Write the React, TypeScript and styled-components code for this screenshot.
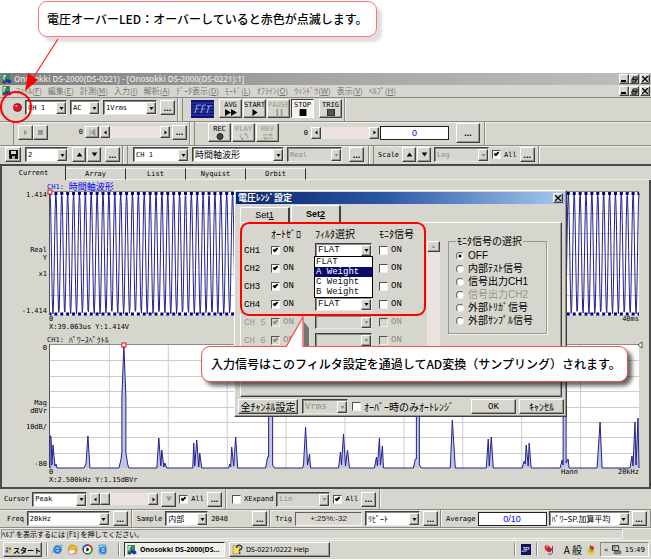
import React, { useState } from "react";
import styled, { createGlobalStyle, css } from "styled-components";

const FACE = "#d6d5ce";
const MONO = '"DejaVu Sans Mono", "Noto Sans CJK JP", monospace';
const GOTHIC = '"Noto Sans CJK JP", sans-serif';
const UI = '"Noto Sans", "Noto Sans CJK JP", sans-serif';

const GlobalStyle = createGlobalStyle`
  *, *::before, *::after { box-sizing: border-box; }
  body { margin: 0; background: #fff; color: #000; overflow: hidden; }
  button, input, select { font: inherit; color: inherit; margin: 0; padding: 0; border: 0; border-radius: 0; }
  p, h1, h2, ul { margin: 0; padding: 0; font: inherit; }
`;

const raised = css`
  background: ${FACE};
  border: 1px solid;
  border-color: #fff #404040 #404040 #fff;
  box-shadow: inset -1px -1px 0 #99978f;
`;
const sunken = css`
  border: 1px solid;
  border-color: #606060 #f4f4f0 #f4f4f0 #606060;
`;

/* ---------- shared controls ---------- */

const Btn = styled.button<{ $w: number; $h?: number; $pressed?: boolean; $off?: boolean }>`
  ${raised}
  flex: none;
  width: ${(p) => p.$w}px;
  height: ${(p) => p.$h ?? 15}px;
  display: flex;
  flex-direction: column;
  align-items: center;
  justify-content: center;
  line-height: 8px;
  white-space: nowrap;
  overflow: hidden;
  color: ${(p) => (p.$off ? "#99978f" : "#000")};
  ${(p) => p.$pressed && css`background: #f3f2ee; border-color: #404040 #fff #fff #404040; box-shadow: none;`}
`;

const DotsMark = styled.span`
  font: bold 9px/6px "Liberation Sans", sans-serif;
`;
const Dots = ({ w = 15, h = 15 }: { w?: number; h?: number }) => (
  <Btn $w={w} $h={h} aria-label="詳細"><DotsMark>...</DotsMark></Btn>
);

const ComboBox = styled.span<{ $w: number; $h: number }>`
  position: relative;
  flex: none;
  display: block;
  width: ${(p) => p.$w}px;
  height: ${(p) => p.$h}px;
`;
const ComboSelect = styled.select<{ $size: number; $family: string }>`
  appearance: none;
  display: block;
  width: 100%;
  height: 100%;
  padding: 0 11px 0 2px;
  background: #fff;
  border: 1px solid;
  border-color: #404040 #e8e8e4 #e8e8e4 #404040;
  box-shadow: inset 1px 1px 0 #8a8a86;
  font-family: ${(p) => p.$family};
  font-size: ${(p) => p.$size}px;
  line-height: 12px;
  opacity: 1;
  &:disabled { background: ${FACE}; color: #8a8a86; }
`;
const ComboArrow = styled.span<{ $off?: boolean }>`
  ${raised}
  position: absolute;
  top: 2px;
  right: 1px;
  bottom: 1px;
  width: 10px;
  display: grid;
  place-items: center;
  pointer-events: none;
  color: ${(p) => (p.$off ? "#8a8a86" : "#000")};
`;

const Tri = ({ dir = "down", size = 5 }: { dir?: "up" | "down" | "left" | "right"; size?: number }) => {
  const d = { up: "M5 2 9 8H1z", down: "M1 2h8L5 8z", left: "M7 1v8L2 5z", right: "M3 1v8l5-4z" }[dir];
  return <svg width={size} height={size} viewBox="0 0 10 10" aria-hidden><path d={d} fill="currentColor" /></svg>;
};

type ComboProps = { label: string; value: string; w: number; h?: number; off?: boolean; size?: number; family?: string };
const Combo = ({ label, value, w, h = 15, off, size = 7, family = MONO }: ComboProps) => (
  <ComboBox $w={w} $h={h}>
    <ComboSelect aria-label={label} disabled={off} defaultValue={value} $size={size} $family={family}>
      <option>{value}</option>
    </ComboSelect>
    <ComboArrow $off={off}><Tri /></ComboArrow>
  </ComboBox>
);

const CheckLabel = styled.label<{ $off?: boolean; $gap?: number }>`
  display: flex;
  align-items: center;
  gap: ${(p) => p.$gap ?? 3}px;
  white-space: nowrap;
  color: ${(p) => (p.$off ? "#8a8a86" : "#000")};
`;
const CheckInput = styled.input`
  appearance: none;
  flex: none;
  width: 9px;
  height: 9px;
  display: grid;
  place-items: center;
  background: #fff;
  border: 1px solid;
  border-color: #505050 #eee #eee #505050;
  &:disabled { background: ${FACE}; }
  &:checked::after {
    content: "";
    width: 5px;
    height: 3px;
    border: solid #000;
    border-width: 0 0 2px 2px;
    transform: rotate(-45deg);
    margin-bottom: 2px;
  }
  &:disabled:checked::after { border-color: #8a8a86; }
`;
const Check = ({ text, on, off, gap }: { text: React.ReactNode; on?: boolean; off?: boolean; gap?: number }) => (
  <CheckLabel $off={off} $gap={gap}>
    <CheckInput type="checkbox" defaultChecked={on} disabled={off} />
    {text}
  </CheckLabel>
);

const ScrollBox = styled.div<{ $w: number }>`
  flex: none;
  display: flex;
  width: ${(p) => p.$w}px;
  height: 12px;
  background: #ece3e1;
`;
const ScrollTrack = styled.span`flex: 1;`;
const Thumb = styled.span`
  ${raised}
  width: 10px;
`;
const Scroll = ({ w, thumb }: { w: number; thumb?: boolean }) => (
  <ScrollBox $w={w}>
    <Btn $w={10} $h={12} aria-label="前へ"><Tri dir="left" /></Btn>
    {thumb && <Thumb />}
    <ScrollTrack />
    <Btn $w={10} $h={12} aria-label="次へ"><Tri dir="right" /></Btn>
  </ScrollBox>
);

const Field = styled.input<{ $w: number; $gray?: boolean }>`
  ${sunken}
  flex: none;
  width: ${(p) => p.$w}px;
  height: 14px;
  text-align: center;
  font: ${(p) => (p.$gray ? 8 : 9)}px "Liberation Sans", sans-serif;
  background: ${(p) => (p.$gray ? "#dcd8d2" : "#fff")};
  color: ${(p) => (p.$gray ? "#222" : "#00f")};
  ${(p) => !p.$gray && css`border-color: #202020;`}
`;

/* ---------- page frame ---------- */

const Page = styled.div`
  position: relative;
  width: 100%;
  overflow: hidden;
  font: 7px/8px ${MONO};
`;
const Header = styled.header`
  height: 73px;
  padding: 1px 0 0 38px;
`;
const Callout = styled.p`
  width: max-content;
  padding: 9px 8px;
  border-radius: 9px;
  background: #fff;
  font: 500 12px/16px ${GOTHIC};
  white-space: nowrap;
`;
const TopCallout = styled(Callout)`
  border: 1px solid #fb7676;
  box-shadow: 5px 5px 3px #dfdfdf;
`;
const FilterCallout = styled(Callout)`
  position: absolute;
  left: 201px;
  top: 346px;
  padding: 9px 6px 9px 9px;
  border: 1px solid #fa5050;
  box-shadow: 4px 4px 4px rgba(0, 0, 0, 0.6);
`;
const Overlay = styled.svg<{ $x: number; $y: number }>`
  position: absolute;
  left: ${(p) => p.$x}px;
  top: ${(p) => p.$y}px;
  overflow: visible;
  pointer-events: none;
`;
const RedRing = styled.div`
  position: absolute;
  left: 0;
  top: 91px;
  width: 32px;
  height: 32px;
  border: 2px solid #f00;
  border-radius: 50%;
  pointer-events: none;
`;
const AppWindow = styled.section`
  background: ${FACE};
`;
const TitleBar = styled.div`
  display: flex;
  align-items: center;
  gap: 2px;
  height: 12px;
  padding: 0 1px 0 2px;
  background: linear-gradient(90deg, #7e7e7e, #a8a6a4 50%, #c0beba);
`;
const TitleText = styled.h1`
  flex: 1;
  color: #e6e5e0;
  font: 600 8px/12px "Open Sans", sans-serif;
  white-space: nowrap;
`;
const MenuBar = styled.nav`
  display: flex;
  align-items: center;
  height: 13px;
  padding: 0 1px 0 2px;
  border-bottom: 1px solid #8a8a86;
`;
const MenuList = styled.div`
  flex: 1;
  display: flex;
  gap: 6px;
  padding-left: 4px;
`;
const MenuItem = styled.button`
  background: none;
  color: #77756f;
  font: 8px/12px ${GOTHIC};
  white-space: nowrap;
`;
const WinButtons = styled.div`
  display: flex;
  height: 10px;
`;
const WinButton = styled(Btn)`
  &:last-child { margin-left: 1px; }
`;

const AppIcon = ({ size = 10 }: { size?: number }) => (
  <svg width={size} height={size} viewBox="0 0 20 20" aria-hidden>
    <rect x="1" y="0" width="15" height="14" fill="#2f8a58" />
    <path d="M4 11V3h4" fill="none" stroke="#d8f5e0" strokeWidth="2.5" />
    <path d="M8 10l10 2 1 5-5 2-7-4z" fill="#1b2fc0" />
    <path d="M1 14h7v5H1z" fill="#444" />
  </svg>
);
const CloseMark = () => (
  <svg width="6" height="6" viewBox="0 0 6 6" aria-hidden><path d="M0 0l6 6M6 0L0 6" stroke="#000" strokeWidth="1.3" /></svg>
);
const CaptionButtons = () => (
  <WinButtons>
    <WinButton $w={10} $h={10} aria-label="最小化">
      <svg width="6" height="6" viewBox="0 0 6 6"><path d="M0 5h5" stroke="#000" strokeWidth="2" /></svg>
    </WinButton>
    <WinButton $w={10} $h={10} aria-label="元に戻す">
      <svg width="7" height="7" viewBox="0 0 7 7"><path d="M2 1h4v3H2zM1 3h4v3H1z" fill="none" stroke="#000" /></svg>
    </WinButton>
    <WinButton $w={10} $h={10} aria-label="閉じる"><CloseMark /></WinButton>
  </WinButtons>
);

const ToolRow = styled.div<{ $h: number; $indent?: number; $last?: boolean }>`
  display: flex;
  gap: 4px;
  height: ${(p) => p.$h}px;
  padding-left: ${(p) => p.$indent ?? 0}px;
  border-bottom: ${(p) => (p.$last ? "2px solid #4a4a4a" : "1px solid #8a8a86")};
  box-shadow: ${(p) => (p.$last ? "none" : "0 1px 0 #efeeea")};
`;
const Group = styled.div<{ $pad?: string; $gap?: number; $line?: boolean }>`
  display: flex;
  align-items: center;
  gap: ${(p) => p.$gap ?? 3}px;
  padding: ${(p) => p.$pad ?? "0"};
  border-right: 1px solid #8a8a86;
  box-shadow: 1px 0 0 #f2f1ed;
  ${(p) => p.$line && css`border-left: 1px solid #8a8a86;`}
`;
const Cluster = styled.div<{ $gap?: number }>`
  display: flex;
  align-items: center;
  gap: ${(p) => p.$gap ?? 1}px;
`;
const Text = styled.span<{ $w?: number; $right?: boolean }>`
  flex: none;
  width: ${(p) => (p.$w ? `${p.$w}px` : "auto")};
  text-align: ${(p) => (p.$right ? "right" : "left")};
  white-space: nowrap;
`;
const LedButton = styled.button`
  width: 10px;
  height: 10px;
  background: ${FACE};
  display: grid;
  place-items: center;
`;
const Caption = styled.span`
  font: 7px/8px "DejaVu Sans Mono", monospace;
`;

const glyphs: Record<string, React.ReactNode> = {
  avg: <path d="M0 0v8l7-4zM7 0v8l7-4z" fill="currentColor" />,
  play: <path d="M4 0v8l6-4z" fill="currentColor" />,
  pause: <path d="M4 0h2v8H4zM9 0h2v8H9z" fill="currentColor" />,
  stop: <path d="M3 0h8v8H3z" fill="currentColor" />,
  trig: <path d="M3 0h8v8H3z" fill="#555" stroke="#111" />,
  rec: <circle cx="7" cy="4" r="3.5" fill="#444" stroke="#111" />,
  loop: <path d="M4 1a4 3.4 0 0 0 2 6l-1-2m1 2-2 1M10 7a4 3.4 0 0 0-2-6l1 2M8 1l2-1" fill="none" stroke="currentColor" />,
  rev: <path d="M1 2h10M9 0l3 2-3 2M13 6H3M5 4 2 6l3 2" fill="none" stroke="currentColor" />,
};
const MediaButton = ({ text, glyph, off, pressed }: { text: string; glyph: string; off?: boolean; pressed?: boolean }) => (
  <Btn $w={23} $h={19} $off={off} $pressed={pressed}>
    <Caption>{text}</Caption>
    <svg width="12" height="7" viewBox="0 0 14 8" aria-hidden>{glyphs[glyph]}</svg>
  </Btn>
);

/* ---------- tabs and charts ---------- */

const TabStrip = styled.div`
  display: flex;
  align-items: flex-end;
  height: 14px;
  border-left: 2px solid #4a4a4a;
`;
const Tab = styled.button<{ $active?: boolean }>`
  width: ${(p) => (p.$active ? 64 : 60)}px;
  height: ${(p) => (p.$active ? 14 : 12)}px;
  background: ${FACE};
  border-right: 1px solid #303030;
  border-top: ${(p) => (p.$active ? "0" : "1px solid #f2f1ed")};
  border-bottom: ${(p) => (p.$active ? "0" : "1px solid #f2f1ed")};
  font: 7px/8px ${MONO};
`;
const TabRest = styled.span`
  flex: 1;
  height: 1px;
  background: #f2f1ed;
`;
const ChartPanel = styled.main`
  display: flex;
  flex-direction: column;
  gap: 4px;
  padding: 2px 10px 3px 0;
  border: solid #4a4a4a;
  border-width: 0 2px 2px 2px;
`;
const ChartGrid = styled.figure`
  margin: 0;
  display: grid;
  grid-template-columns: 45px minmax(0, 1fr);
  column-gap: 2px;
`;
const ChartTitle = styled.figcaption<{ $blue?: boolean }>`
  grid-column: 1 / -1;
  padding-left: 45px;
  height: 9px;
  display: flex;
  align-items: center;
  gap: 5px;
  color: ${(p) => (p.$blue ? "#00f" : "#111")};
`;
const Kana = styled.span<{ $size: number }>`
  font: ${(p) => p.$size}px/9px ${GOTHIC};
`;
const YAxis = styled.div`
  display: grid;
  grid-template-rows: 55px 24px 1fr 8px;
  text-align: right;
`;
const Plot = styled.svg`
  display: block;
  width: 100%;
  height: 124px;
  background: #fff;
  border-left: 1px solid #555;
  border-top: 1px solid #8a8a86;
  overflow: visible;
`;
const Footer = styled.div`
  grid-column: 2;
  line-height: 8px;
`;
const FootRow = styled.div`
  display: flex;
  justify-content: space-between;
`;
const FootRight = styled.span`
  display: flex;
  gap: 40px;
`;

const W = 590;
const H = 123;
const wavePath = Array.from({ length: 1025 }, (_, i) => {
  const y = H / 2 - (H / 2 - 1) * Math.cos((2 * Math.PI * 100 * i) / 1024);
  return `${i ? "L" : "M"}${((i * W) / 1024).toFixed(2)} ${y.toFixed(1)}`;
}).join("");

const spectrum: [number, number][] = [
  [0, 123], [0, 91], [1, 91], [2, 120], [3, 100], [5, 121], [6, 119], [7, 123], [34, 123], [36, 119], [38, 91], [40, 123],
  [69, 123], [71, 115], [72, 108], [72, 52], [74, 0], [76, 52], [76, 108], [78, 120], [79, 123],
  [107, 123], [109, 93], [111, 121], [112, 105], [114, 122], [115, 118], [117, 123],
  [143, 123], [144, 98], [145, 121], [147, 95], [149, 122], [150, 108], [152, 123],
  [179, 123], [180, 119], [181, 122], [182, 102], [184, 121], [186, 92], [188, 123],
  [216, 123], [218, 112], [219, 112], [219, 52], [221, 8], [223, 52], [223, 120], [225, 123],
  [253, 123], [254, 119], [256, 82], [258, 120], [260, 109], [261, 123],
  [289, 123], [291, 107], [292, 120], [294, 89], [296, 121], [298, 105], [300, 123],
  [325, 123], [327, 112], [328, 121], [330, 93], [331, 120], [333, 101], [334, 123],
  [364, 123], [366, 114], [367, 114], [367, 52], [368, 10], [370, 52], [370, 120], [372, 123],
  [401, 123], [403, 75], [406, 123], [437, 123], [439, 94], [440, 121], [442, 92], [444, 123],
  [473, 123], [475, 116], [476, 119], [477, 100], [479, 121], [480, 98], [482, 123],
  [511, 123], [513, 115], [514, 120], [514, 52], [516, 20], [517, 52], [517, 118], [519, 114], [520, 123],
  [548, 123], [551, 77], [553, 123], [581, 123], [583, 111], [584, 121], [586, 77], [587, 120], [589, 73], [590, 123],
];
const spectrumPath = "M" + spectrum.map((p) => p.join(" ")).join("L");

const GridLines = ({ rows, cols }: { rows: number; cols: number }) => (
  <g stroke="#cfcccc">
    {Array.from({ length: rows - 1 }, (_, i) => {
      const y = Math.round(((i + 1) * H) / rows) + 0.5;
      return <line key={i} x1="0" x2={W} y1={y} y2={y} />;
    })}
    {Array.from({ length: cols - 1 }, (_, i) => {
      const x = ((i + 1) * W) / cols + 0.5;
      return <line key={`c${i}`} x1={x} x2={x} y1="0" y2={H} />;
    })}
  </g>
);

const TimeChart = () => (
  <ChartGrid>
    <ChartTitle $blue>CH1: <Kana $size={9}>時間軸波形</Kana></ChartTitle>
    <YAxis><span>1.414</span><span>Real<br />Y</span><span>x1</span><span>-1.414</span></YAxis>
    <Plot viewBox={`0 0 ${W} ${H}`} preserveAspectRatio="none">
      <GridLines rows={6} cols={1} />
      <path d={wavePath} fill="none" stroke="#202090" strokeWidth="1" />
      <path d={`M0 1.5H${W}M0 ${H - 1}H${W}`} stroke="#000080" strokeWidth="3" strokeDasharray="3 2.9" strokeDashoffset="1.5" />
      <rect x="-2" y="-2" width="4" height="4" fill="#fff" stroke="#f00" />
    </Plot>
    <Footer>
      <FootRow><span>0</span><span>40ms</span></FootRow>
      X:39.063us Y:1.414V
    </Footer>
  </ChartGrid>
);

const SpectrumChart = () => (
  <ChartGrid>
    <ChartTitle>CH1: <Kana $size={8}>ﾊﾟﾜｰｽﾍﾟｸﾄﾙ</Kana></ChartTitle>
    <YAxis><span>0</span><span>Mag<br />dBVr</span><span>10dB/</span><span>-80</span></YAxis>
    <Plot viewBox={`0 0 ${W} ${H}`} preserveAspectRatio="none">
      <GridLines rows={8} cols={10} />
      <path d={spectrumPath} fill="#c4c4e4" stroke="#20208c" strokeWidth="1" />
      <rect x="72" y="-2" width="4" height="4" fill="#fff" stroke="#f00" />
      <path d="M593-3v6l-4-3z" fill="#fff" stroke="#333" strokeWidth="0.8" />
    </Plot>
    <Footer>
      <FootRow><span>0</span><FootRight><span>Hann</span><span>20kHz</span></FootRight></FootRow>
      X:2.500kHz Y:1.15dBVr
    </Footer>
  </ChartGrid>
);

/* ---------- voltage range dialog ---------- */

const DialogBox = styled.section`
  ${raised}
  position: absolute;
  left: 234px;
  top: 190px;
  width: 333px;
  padding: 1px;
  font: 10px/12px ${GOTHIC};
`;
const DialogTitle = styled.div`
  display: flex;
  align-items: center;
  justify-content: space-between;
  height: 12px;
  padding: 0 2px;
  background: linear-gradient(90deg, #0a246a, #2c57a6 45%, #a6caf0);
  color: #fff;
  font: bold 9px/12px ${GOTHIC};
`;
const DialogTabs = styled.div`
  display: flex;
  align-items: flex-end;
  gap: 1px;
  height: 18px;
  padding-left: 4px;
`;
const DialogTab = styled.button<{ $active?: boolean }>`
  width: 50px;
  height: ${(p) => (p.$active ? 17 : 15)}px;
  background: ${FACE};
  border: solid;
  border-width: 1px 2px 0 1px;
  border-color: #fff #404040 #fff #fff;
  border-radius: 2px 2px 0 0;
  font: ${(p) => (p.$active ? "bold " : "")}9px/14px "Liberation Sans", sans-serif;
`;
const TabPage = styled.div`
  display: flex;
  align-items: flex-start;
  height: 175px;
  margin: 0 3px 0 4px;
  padding: 4px 14px 0 3px;
  border: 1px solid;
  border-color: #fff #404040 #404040 #fff;
  box-shadow: inset -1px -1px 0 #99978f;
`;
const ChannelTable = styled.table`
  border-collapse: collapse;
  table-layout: fixed;
  width: 183px;
  th, td { padding: 0; text-align: left; font-weight: normal; white-space: nowrap; }
  thead tr { height: 14px; }
  tbody tr { height: 18px; }
`;
const Narrow = styled.span<{ $off?: boolean }>`
  font: 9px/12px "Liberation Mono", monospace;
  color: ${(p) => (p.$off ? "#99978f" : "inherit")};
`;
const Col = styled.col<{ $w: number }>`
  width: ${(p) => p.$w}px;
`;
const VScroll = styled.div`
  flex: none;
  width: 13px;
  height: 112px;
  margin-top: 14px;
  background: #ece3e1;
`;
const MonitorSet = styled.fieldset`
  margin: 8px 0 0 8px;
  padding: 2px 7px 6px;
  min-width: 0;
  flex: 1;
  border: 1px solid #99978f;
  box-shadow: 1px 1px 0 #f5f4f0;
  legend { padding: 0 1px; line-height: 12px; white-space: nowrap; }
`;
const RadioLabel = styled.label<{ $off?: boolean }>`
  display: flex;
  align-items: center;
  gap: 4px;
  height: 13px;
  font: 10px/12px "Liberation Sans", "Noto Sans CJK JP", sans-serif;
  white-space: nowrap;
  color: ${(p) => (p.$off ? "#99978f" : "#000")};
`;
const RadioInput = styled.input`
  appearance: none;
  flex: none;
  width: 8px;
  height: 8px;
  border-radius: 50%;
  border: 1px solid;
  border-color: #606060 #eee #eee #606060;
  background: #fff;
  &:checked { background: radial-gradient(circle, #000 0 1px, #fff 2px); }
`;
const FilterList = styled.ul`
  position: absolute;
  left: 79px;
  top: 65px;
  width: 59px;
  border: 1px solid #000;
  background: #fff;
  list-style: none;
`;
const FilterItem = styled.li<{ $hot?: boolean }>`
  padding-left: 1px;
  font: 9px/10px "Liberation Mono", monospace;
  background: ${(p) => (p.$hot ? "#0a0a6a" : "#fff")};
  color: ${(p) => (p.$hot ? "#fff" : "#111")};
`;
const DialogFoot = styled.div`
  display: flex;
  align-items: center;
  gap: 4px;
  padding: 2px 1px 1px 2px;
`;
const FootButtons = styled.div`
  display: flex;
  gap: 3px;
  margin-left: auto;
`;
const RedFrame = styled.div`
  position: absolute;
  left: 240px;
  top: 222px;
  width: 186px;
  height: 94px;
  border: 2px solid #f00;
  border-radius: 9px;
  pointer-events: none;
`;

const channels = [
  { name: "CH1" }, { name: "CH2" }, { name: "CH3" }, { name: "CH4" },
  { name: "CH 5", off: true }, { name: "CH 6", off: true },
];
const sources = ["OFF", "内部ﾃｽﾄ信号", "信号出力CH1", "信号出力CH2", "外部ﾄﾘｶﾞ信号", "外部ｻﾝﾌﾟﾙ信号"];

const RangeDialog = () => {
  const [source, setSource] = useState("OFF");
  return (
    <DialogBox role="dialog" aria-label="電圧ﾚﾝｼﾞ設定">
      <DialogTitle>
        <span>電圧ﾚﾝｼﾞ設定</span>
        <WinButton $w={10} $h={10} aria-label="閉じる"><CloseMark /></WinButton>
      </DialogTitle>
      <DialogTabs>
        <DialogTab>Set<u>1</u></DialogTab>
        <DialogTab $active>Set<u>2</u></DialogTab>
      </DialogTabs>
      <TabPage>
        <ChannelTable>
          <colgroup><Col $w={27} /><Col $w={44} /><Col $w={64} /><Col $w={48} /></colgroup>
          <thead>
            <tr><th /><th>ｵｰﾄｾﾞﾛ</th><th>ﾌｨﾙﾀ選択</th><th>ﾓﾆﾀ信号</th></tr>
          </thead>
          <tbody>
            {channels.map(({ name, off }) => (
              <tr key={name}>
                <td><Narrow $off={off}>{name}</Narrow></td>
                <td><Check on off={off} text={<Narrow>ON</Narrow>} /></td>
                <td>
                  <Combo label={`${name} ﾌｨﾙﾀ`} value={off ? "" : "FLAT"} w={57} h={14} off={off} size={9} family='"Liberation Mono", monospace' />
                </td>
                <td><Check off={off} text={<Narrow>ON</Narrow>} /></td>
              </tr>
            ))}
          </tbody>
        </ChannelTable>
        <VScroll><Btn $w={13} $h={11} $off aria-label="上へ"><Tri dir="up" /></Btn></VScroll>
        <MonitorSet>
          <legend>ﾓﾆﾀ信号の選択</legend>
          {sources.map((s) => (
            <RadioLabel key={s} $off={s === "信号出力CH2"}>
              <RadioInput type="radio" name="monitor" checked={source === s} disabled={s === "信号出力CH2"} onChange={() => setSource(s)} />
              {s}
            </RadioLabel>
          ))}
        </MonitorSet>
      </TabPage>
      <DialogFoot>
        <Btn $w={60}>全ﾁｬﾝﾈﾙ設定</Btn>
        <Combo label="単位" value="Vrms" w={46} off size={9} family='"Liberation Mono", monospace' />
        <Check text="ｵｰﾊﾞｰ時のみｵｰﾄﾚﾝｼﾞ" />
        <FootButtons>
          <Btn $w={45}><Narrow>OK</Narrow></Btn>
          <Btn $w={45}>ｷｬﾝｾﾙ</Btn>
        </FootButtons>
      </DialogFoot>
      <FilterList role="listbox" aria-label="ﾌｨﾙﾀ選択">
        {["FLAT", "A Weight", "C Weight", "B Weight"].map((f) => (
          <FilterItem key={f} role="option" aria-selected={f === "A Weight"} $hot={f === "A Weight"}>{f}</FilterItem>
        ))}
      </FilterList>
    </DialogBox>
  );
};

/* ---------- status bar and taskbar ---------- */

const StatusBar = styled.div`
  display: flex;
  height: 13px;
  padding: 1px 28px 1px 1px;
  border-bottom: 1px solid #f2f1ed;
`;
const StatusText = styled.p`
  flex: 1;
  border: 1px solid;
  border-color: #99978f #f2f1ed #f2f1ed #99978f;
  font: 7px/9px ${GOTHIC};
  white-space: nowrap;
`;
const Taskbar = styled.footer`
  display: flex;
  align-items: center;
  gap: 4px;
  height: 18px;
  padding: 0 2px 1px 3px;
  background: ${FACE};
`;
const StartButton = styled.button`
  ${raised}
  display: flex;
  align-items: center;
  gap: 1px;
  width: 39px;
  height: 15px;
  padding-left: 1px;
  white-space: nowrap;
  font: bold 7px/12px ${GOTHIC};
`;
const Divider = styled.span`
  width: 2px;
  height: 13px;
  background: linear-gradient(90deg, #8a8a86 50%, #fff 50%);
`;
const QuickLaunch = styled.div`
  display: flex;
  gap: 4px;
  width: 62px;
`;
const TaskButton = styled.button<{ $active?: boolean }>`
  ${raised}
  display: flex;
  align-items: center;
  gap: 3px;
  width: 101px;
  height: 15px;
  padding-left: 2px;
  overflow: hidden;
  white-space: nowrap;
  font: ${(p) => (p.$active ? "bold " : "")}7px/12px ${UI};
  ${(p) => p.$active && css`background: #efeeea; border-color: #303030 #fff #fff #303030; box-shadow: none;`}
`;
const Tray = styled.div`
  display: flex;
  align-items: center;
  gap: 5px;
  margin-left: auto;
`;
const JpBadge = styled.span`
  padding: 0 1px;
  background: #101060;
  color: #fff;
  font: 7px/11px "Liberation Sans", sans-serif;
`;
const ImeText = styled.span`
  padding-left: 4px;
  font: 10px/12px ${GOTHIC};
`;
const Clock = styled.div`
  display: flex;
  align-items: center;
  gap: 3px;
  height: 15px;
  width: 49px;
  padding: 0 3px;
  border: 1px solid;
  border-color: #8a8a86 #fff #fff #8a8a86;
  font: 7px/12px "DejaVu Sans", sans-serif;
`;

const WindowsFlag = () => (
  <svg width="9" height="10" viewBox="0 0 18 20" aria-hidden>
    <path d="M3 4q3-3 6-1L8 9Q5 7 2 9z" fill="#e33" /><path d="M10 3q3 2 6 0l-1 7q-3 1-6-1z" fill="#3a3" />
    <path d="M2 11q3-2 6 0l-1 6q-3-2-6 0z" fill="#24c" /><path d="M9 11q3 2 6 0l-1 7q-3 1-6-1z" fill="#eb2" />
  </svg>
);
const quickIcons = [
  <g key="ie"><circle cx="10" cy="10" r="6" fill="none" stroke="#1c7ad8" strokeWidth="3.5" /><path d="M5 10h10" stroke="#1c7ad8" strokeWidth="3" /><path d="M1 17Q-1 9 17 2q3 0 1 4" fill="none" stroke="#4aa0e8" strokeWidth="1.6" /></g>,
  <g key="msn"><path d="M3 9q0-8 8-7 8 1 7 9l-2 7H4z" fill="#f5b625" stroke="#a86a08" /><path d="M3 12l7-2 6 4-5 4H4z" fill="#fff" stroke="#c78" /></g>,
  <g key="wmp"><circle cx="10" cy="10" r="8" fill="#fff" stroke="#222" strokeWidth="2" /><path d="M10 2a8 8 0 0 1 8 8" stroke="#e22" strokeWidth="3" fill="none" /><path d="M18 10a8 8 0 0 1-8 8" stroke="#2a3" strokeWidth="3" fill="none" /><path d="M2 10a8 8 0 0 1 8-8" stroke="#24d" strokeWidth="3" fill="none" /><path d="M8 6v8l6-4z" fill="#111" /></g>,
  <g key="oe"><path d="M4 2h12v16H4z" fill="#cfe4fa" stroke="#28c" strokeWidth="1.5" /><circle cx="11" cy="11" r="5" fill="none" stroke="#1c7ad8" strokeWidth="2.5" /><path d="M7 11h8" stroke="#1c7ad8" strokeWidth="2" /></g>,
];

const menus: [string, string][] = [
  ["ﾌｧｲﾙ", "F"], ["編集", "E"], ["計測", "M"], ["入力", "I"], ["解析", "A"], ["ﾃﾞｰﾀ表示", "D"],
  ["ﾓｰﾄﾞ", "L"], ["ｵﾌﾗｲﾝ", "O"], ["ｳｨﾝﾄﾞｳ", "W"], ["表示", "V"], ["ﾍﾙﾌﾟ", "H"],
];

export default function App() {
  return (
    <Page>
      <GlobalStyle />
      <Header>
        <TopCallout>電圧オーバーLED：オーバーしていると赤色が点滅します。</TopCallout>
      </Header>

      <AppWindow>
        <TitleBar>
          <AppIcon />
          <TitleText>Onosokki DS-2000(DS-0221) - [Onosokki DS-2000(DS-0221):1]</TitleText>
          <CaptionButtons />
        </TitleBar>
        <MenuBar>
          <AppIcon />
          <MenuList>
            {menus.map(([name, key]) => <MenuItem key={name}>{name}(<u>{key}</u>)</MenuItem>)}
          </MenuList>
          <CaptionButtons />
        </MenuBar>

        <ToolRow $h={24}>
          <Group $pad="0 2px 4px 12px">
            <LedButton aria-label="電圧オーバーLED">
              <svg width="9" height="9" viewBox="0 0 9 9"><circle cx="4.5" cy="4.5" r="4" fill="#e8141c" stroke="#5a1014" strokeWidth="0.7" /><circle cx="3.3" cy="3" r="1.1" fill="#ff9c9c" /></svg>
            </LedButton>
            <Combo label="チャンネル" value="CH 1" w={42} />
            <Combo label="カップリング" value="AC" w={30} />
            <Combo label="レンジ" value="1Vrms" w={54} />
            <Dots />
          </Group>
          <Group $pad="0 2px 2px 8px" $gap={5} $line>
            <svg width="23" height="18" viewBox="0 0 23 18" role="img" aria-label="FFT">
              <rect width="23" height="18" fill="#10107c" />
              <path d="M0 3h23M0 6h23M0 9h23M0 12h23M0 15h23" stroke="#5e70c4" strokeWidth="0.6" />
              <path d="M4 13 6 5h4M5 9h3M10 13l2-8h3M11 9h3M16 6h5M18 6l-2 7" fill="none" stroke="#8098dc" strokeWidth="1.2" />
            </svg>
            <Cluster>
              <MediaButton text="AVG" glyph="avg" />
              <MediaButton text="START" glyph="play" />
              <MediaButton text="PAUSE" glyph="pause" off />
              <MediaButton text="STOP" glyph="stop" pressed />
            </Cluster>
            <MediaButton text="TRIG" glyph="trig" />
          </Group>
        </ToolRow>

        <ToolRow $h={24} $indent={13}>
          <Group $pad="0 2px 3px 4px" $gap={2} $line>
            <Cluster $gap={0}>
              <Btn $w={15} $off aria-label="再生"><Tri dir="right" size={7} /></Btn>
              <Btn $w={15} $off aria-label="停止"><svg width="5" height="5"><path d="M0 0h5v5H0z" fill="currentColor" /></svg></Btn>
            </Cluster>
            <Text $w={33} $right>0</Text>
            <Cluster>
              <Btn $w={14} $h={12} $off aria-label="先頭"><svg width="7" height="7" viewBox="0 0 7 7"><path d="M1 0v7M6 0v7L2 3.5z" fill="currentColor" stroke="currentColor" strokeWidth="0.8" /></svg></Btn>
              <Scroll w={70} />
            </Cluster>
            <Dots />
          </Group>
          <Group $pad="0 4px 2px 13px" $gap={3} $line>
            <Cluster>
              <MediaButton text="REC" glyph="rec" />
              <MediaButton text="PLAY" glyph="loop" off />
              <MediaButton text="REV" glyph="rev" off />
            </Cluster>
            <Text $w={26} $right>0</Text>
            <Cluster><Scroll w={68} /><Field $w={69} defaultValue="0" aria-label="位置" /></Cluster>
            <Cluster $gap={0}><Text $w={4} /><Dots w={24} h={20} /></Cluster>
          </Group>
        </ToolRow>

        <ToolRow $h={20} $last>
          <Group $pad="0 2px 1px 5px" $gap={4}>
            <Btn $w={16} aria-label="保存">
              <svg width="9" height="9" viewBox="0 0 9 9"><path d="M0 0h9v9H1L0 8z" fill="#111" /><path d="M2 1h5v3H2z" fill="#d8d8d0" /><path d="M3 6h3v3H3z" fill="#aaa" /></svg>
            </Btn>
            <Combo label="メモリ" value="2" w={43} />
            <Cluster>
              <Btn $w={14} aria-label="上"><Tri dir="up" size={7} /></Btn>
              <Btn $w={14} aria-label="下"><Tri size={7} /></Btn>
            </Cluster>
            <Dots />
          </Group>
          <Group $pad="0 4px 1px 5px" $line>
            <Combo label="表示チャンネル" value="CH 1" w={56} />
            <Combo label="表示データ" value="時間軸波形" w={92} size={9} family={GOTHIC} />
            <Combo label="形式" value="Real" w={55} off />
            <Cluster $gap={0}><Text $w={4} /><Dots /></Cluster>
          </Group>
          <Group $pad="0 3px 1px 4px" $line>
            <Text>Scale</Text>
            <Cluster>
              <Btn $w={14} aria-label="拡大"><Tri dir="up" size={7} /></Btn>
              <Btn $w={14} aria-label="縮小"><Tri size={7} /></Btn>
            </Cluster>
            <Combo label="スケール" value="Log" w={55} off />
            <Check on text="All" />
            <Dots />
          </Group>
        </ToolRow>

        <TabStrip>
          <Tab $active>Current</Tab>
          <Tab>Array</Tab>
          <Tab>List</Tab>
          <Tab>Nyquist</Tab>
          <Tab>Orbit</Tab>
          <TabRest />
        </TabStrip>
        <ChartPanel>
          <TimeChart />
          <SpectrumChart />
        </ChartPanel>

        <ToolRow $h={21}>
          <Group $pad="0 3px 0 4px" $gap={3}>
            <Cluster $gap={3}><Text>Cursor</Text><Combo label="カーソル" value="Peak" w={55} /></Cluster>
            <Scroll w={68} thumb />
            <Btn $w={15} $off aria-label="下"><Tri size={8} /></Btn>
            <Check on text="All" />
            <Dots />
          </Group>
          <Group $pad="0 3px 0 2px" $gap={3}>
            <Check text="XExpand" />
            <Combo label="拡大" value="Lin" w={54} off />
            <Check on text="All" />
            <Dots />
          </Group>
        </ToolRow>
        <ToolRow $h={18}>
          <Group $pad="0 3px 0 7px" $gap={3}>
            <Text>Freq</Text>
            <Combo label="周波数" value="20kHz" w={83} />
            <Dots />
          </Group>
          <Group $pad="0 2px 0 1px" $gap={3}>
            <Text>Sample</Text>
            <Combo label="サンプル" value="内部" w={43} size={8} family={GOTHIC} />
            <Text $w={38}>2048</Text>
            <Dots />
          </Group>
          <Group $pad="0 2px 0 1px" $gap={3}>
            <Text>Trig</Text>
            <Field $w={67} $gray defaultValue="+:25%:-32" aria-label="Trig" />
            <Combo label="トリガ" value="ﾘﾋﾟｰﾄ" w={55} size={8} family={GOTHIC} />
            <Dots />
          </Group>
          <Group $pad="0 3px 0 1px" $gap={2}>
            <Text>Average</Text>
            <Field $w={69} defaultValue="0/10" aria-label="Average" />
            <Combo label="平均" value="ﾊﾟﾜｰSP.加算平均" w={81} size={8} family={GOTHIC} />
            <Dots />
          </Group>
        </ToolRow>
        <StatusBar><StatusText>ﾍﾙﾌﾟを表示するには [F1] を押してください。</StatusText></StatusBar>
      </AppWindow>

      <Taskbar>
        <StartButton><WindowsFlag />スタート</StartButton>
        <Divider />
        <QuickLaunch>
          {quickIcons.map((icon, i) => <svg key={i} width="11" height="11" viewBox="0 0 20 20" aria-hidden>{icon}</svg>)}
        </QuickLaunch>
        <Divider />
        <TaskButton $active><AppIcon />Onosokki DS-2000(DS...</TaskButton>
        <TaskButton>
          <svg width="11" height="11" viewBox="0 0 20 20" aria-hidden><path d="M2 3h11v15H2z" fill="#f4e24a" stroke="#776" /><path d="M8 7q1-5 5-5t5 4q0 3-4 5v2M14 15v3" fill="none" stroke="#333" strokeWidth="2.5" /></svg>
          DS-0221/0222 Help
        </TaskButton>
        <Tray>
          <Divider />
          <JpBadge>JP</JpBadge>
          <Divider />
          <svg width="12" height="12" viewBox="0 0 24 24" aria-hidden><path d="M3 5q5-5 10 0l6 6-5 6Q4 15 3 5z" fill="#d81830" /><path d="M6 6q3-2 5 0" stroke="#fbb" strokeWidth="2" fill="none" /><path d="M19 4v14q-4 6-9 1" fill="none" stroke="#555" strokeWidth="2" /></svg>
          <ImeText>A 般</ImeText>
          <svg width="8" height="11" viewBox="0 0 16 22" aria-hidden><path d="M1 9h14l-2 12H3z" fill="#e8c830" /><path d="M4 9 7 1l3 6" fill="#2a9a3a" /><circle cx="10" cy="8" r="4" fill="#d8242c" /><path d="M3 14h10" stroke="#7a5" strokeWidth="2" /></svg>
          <Clock>
            «
            <svg width="11" height="11" viewBox="0 0 22 22" aria-hidden><path d="M3 3h13v10H3z" fill="#8fd0e8" stroke="#222" strokeWidth="2" /><path d="M5 5h5v4H5z" fill="#e83ac0" /><path d="M10 8h5v4h-5z" fill="#f4e030" /><path d="M8 14h12v6H6z" fill="#888" stroke="#222" /></svg>
            <time>15:49</time>
          </Clock>
        </Tray>
      </Taskbar>

      <RangeDialog />
      <RedFrame />
      <FilterCallout>入力信号はこのフィルタ設定を通過してAD変換（サンプリング）されます。</FilterCallout>
      <Overlay $x={284} $y={314} width="24" height="34" aria-hidden>
        <path d="M20 8v24h5V14z" fill="#000" opacity="0.45" />
        <path d="M2 33 19 3v30z" fill="#fff" />
        <path d="M2 33 19 3v30" fill="none" stroke="#fa4444" strokeWidth="1.2" />
      </Overlay>
      <RedRing />
      <Overlay $x={24} $y={38} width="36" height="54" aria-hidden>
        <path d="M34 1 9 40" stroke="#f22" strokeWidth="1.2" />
        <path d="M1 53 4 35l10 7z" fill="#f00" />
      </Overlay>
    </Page>
  );
}
